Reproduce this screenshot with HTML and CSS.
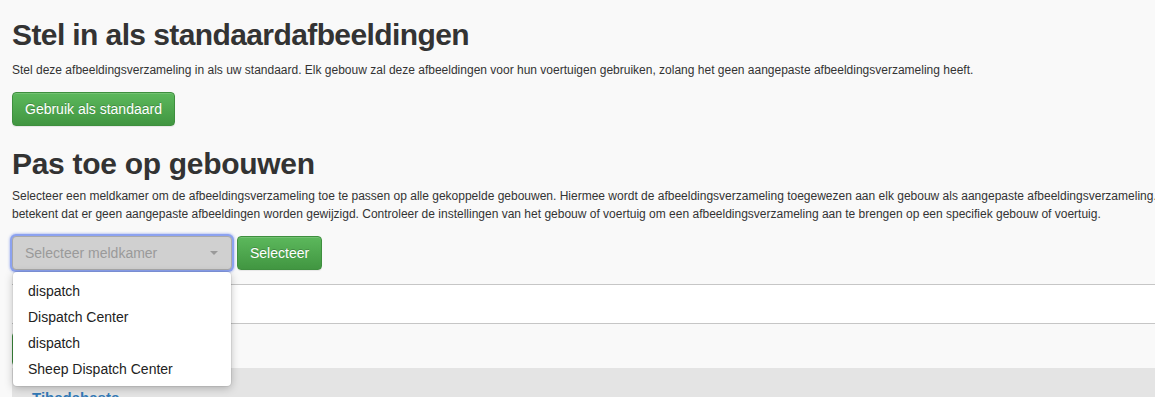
FILE: index.html
```html
<!DOCTYPE html>
<html lang="nl">

<head>
    <meta charset="UTF-8">
    <meta name="viewport" content="width=device-width, initial-scale=1.0">
    <title>Afbeeldingsverzameling</title>
    <link rel="stylesheet" href="styles.css">
</head>

<body>
    <div class="page">
        <h1 class="title">Stel in als standaardafbeeldingen</h1>
        <p class="lead">Stel deze afbeeldingsverzameling in als uw standaard. Elk gebouw zal deze afbeeldingen voor hun voertuigen gebruiken, zolang het geen aangepaste afbeeldingsverzameling heeft.</p>
        <button class="btn btn-green">Gebruik als standaard</button>

        <h2 class="subtitle">Pas toe op gebouwen</h2>
        <p class="lead">Selecteer een meldkamer om de afbeeldingsverzameling toe te passen op alle gekoppelde gebouwen. Hiermee wordt de afbeeldingsverzameling toegewezen aan elk gebouw als aangepaste afbeeldingsverzameling.<br>betekent dat er geen aangepaste afbeeldingen worden gewijzigd. Controleer de instellingen van het gebouw of voertuig om een afbeeldingsverzameling aan te brengen op een specifiek gebouw of voertuig.</p>

        <div class="picker">
            <div class="select-wrap">
                <div class="select">
                    <span>Selecteer meldkamer</span>
                    <span class="caret"></span>
                </div>
                <ul class="options">
                    <li>dispatch</li>
                    <li>Dispatch Center</li>
                    <li>dispatch</li>
                    <li>Sheep Dispatch Center</li>
                </ul>
            </div>
            <button class="btn btn-green">Selecteer</button>
        </div>

        <div class="buildings">
            <div class="row"></div>
            <div class="row striped"><button class="btn btn-green btn-small" aria-label="Toepassen"></button></div>
        </div>

        <div class="tabs">
            <a href="#">Tibedahaste</a>
        </div>
    </div>
</body>

</html>
```

FILE: styles.css
```css
body {
    margin: 0;
    background-color: #f9f9f9;
    font-family: "Liberation Sans", Arial, sans-serif;
    color: #333;
    overflow: hidden;
}

.page {
    padding: 18px 0 0 12px;
}

.title {
    margin: 0 0 10px;
    font-size: 30px;
    line-height: 33px;
    letter-spacing: -0.6px;
    font-weight: bold;
    color: #333;
}

.subtitle {
    margin: 21px 0 7px;
    font-size: 30px;
    line-height: 33px;
    letter-spacing: -0.3px;
    font-weight: bold;
    color: #333;
}

.lead {
    margin: 0 0 13px;
    font-size: 12px;
    line-height: 18px;
    white-space: nowrap;
}

.btn {
    display: inline-block;
    padding: 6px 12px;
    font-family: inherit;
    font-size: 14px;
    line-height: 20px;
    border-radius: 4px;
    cursor: pointer;
}

.btn-green {
    color: white;
    background-image: linear-gradient(to bottom, #5cb85c 0%, #419641 100%);
    border: 1px solid #3e8f3e;
    text-shadow: 0 -1px 0 rgba(0, 0, 0, 0.2);
    box-shadow: inset 0 1px 0 rgba(255, 255, 255, 0.15), 0 1px 1px rgba(0, 0, 0, 0.075);
}

.picker {
    display: flex;
    align-items: flex-start;
    gap: 5px;
    margin-top: 13px;
}

.select-wrap {
    position: relative;
}

.select {
    display: flex;
    align-items: center;
    justify-content: space-between;
    box-sizing: border-box;
    width: 220px;
    height: 34px;
    padding: 0 13px 0 12px;
    font-size: 14px;
    color: #9a9a9a;
    background-color: #d0d0d0;
    border: 1px solid #a9a9a9;
    border-radius: 4px;
    box-shadow: 0 0 0 2px #8ca2f0, 0 0 2px 3px rgba(140, 162, 240, 0.5);
}

.caret {
    width: 0;
    height: 0;
    border-left: 4px solid transparent;
    border-right: 4px solid transparent;
    border-top: 4px solid #9a9a9a;
}

.options {
    position: absolute;
    top: 36px;
    left: 1px;
    z-index: 5;
    width: 218px;
    box-sizing: border-box;
    margin: 0;
    padding: 6px 0 4px;
    list-style: none;
    background-color: white;
    border-radius: 4px;
    box-shadow: 0 2px 8px rgba(0, 0, 0, 0.25), 0 0 0 1px rgba(0, 0, 0, 0.06);
}

.options li {
    padding: 0 15px;
    font-size: 14px;
    line-height: 26px;
    color: #222;
}

.buildings {
    margin-top: 14px;
    border-top: 1px solid #c6c6c6;
}

.row {
    height: 38px;
    background-color: white;
    border-bottom: 1px solid #c6c6c6;
}

.row.striped {
    height: 44px;
    background-color: #f9f9f9;
    border-bottom: none;
    padding-top: 8px;
    box-sizing: border-box;
}

.btn-small {
    width: 80px;
    height: 34px;
}

.tabs {
    height: 40px;
    padding: 20px 0 0 20px;
    background-color: #e4e4e4;
}

.tabs a {
    font-size: 15px;
    font-weight: bold;
    line-height: 20px;
    color: #337ab7;
    text-decoration: none;
}
```
